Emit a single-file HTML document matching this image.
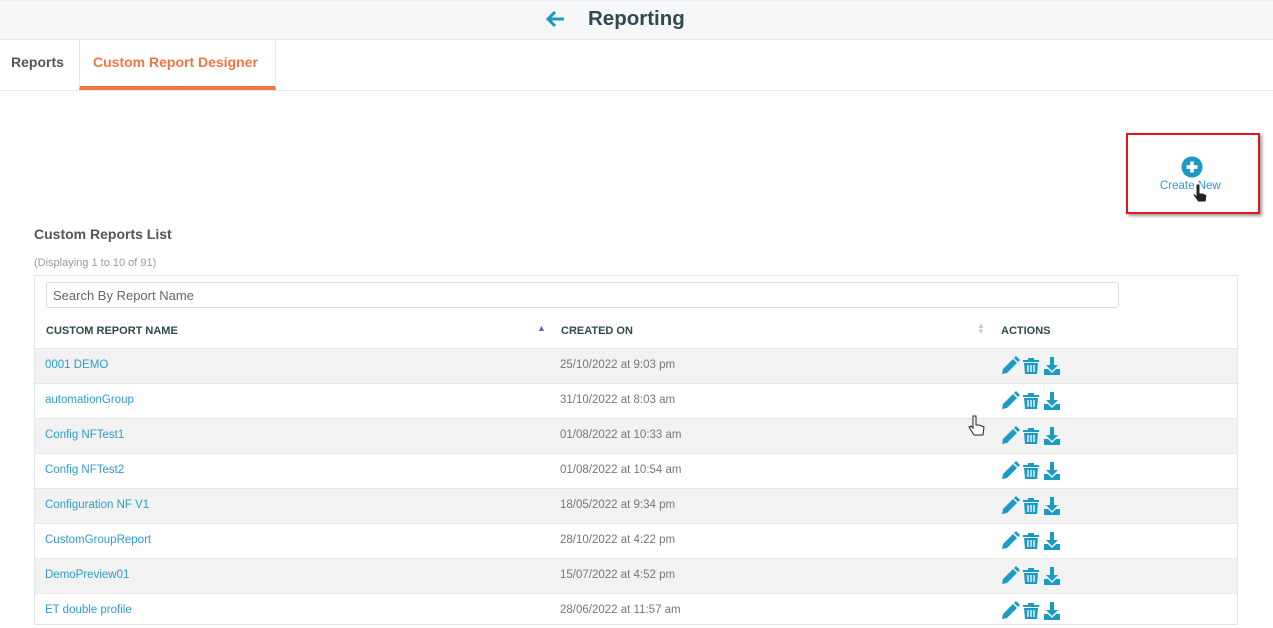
<!DOCTYPE html>
<html><head><meta charset="utf-8"><style>
*{margin:0;padding:0;box-sizing:border-box}
body{width:1273px;height:618px;overflow:hidden;background:#fff;font-family:"Liberation Sans",Arial,sans-serif;position:relative}
.abs{position:absolute}
.top{left:0;top:0;width:1273px;height:40px;background:#f6f7f8;border-bottom:1px solid #e3e6e9;border-top:1px solid #eceef0}
.title{left:588px;top:7px;font-size:20.5px;font-weight:bold;color:#2f4a4f}
.tabs{left:0;top:40px;width:1273px;height:51px;border-bottom:1px solid #e6e8ea}
.tab1{left:11px;top:54px;font-size:14px;font-weight:bold;color:#555}
.tab2{left:79px;top:40px;width:197px;height:50px;border-left:1px solid #e6e8ea;border-right:1px solid #e6e8ea;border-bottom:4px solid #ef7640}
.tab2 span{position:absolute;left:13px;top:14px;font-size:14px;font-weight:bold;color:#ef7640}
.cn{left:1126px;top:133px;width:134px;height:81px;border:2px solid #e8141b;box-shadow:2px 2px 3px #999}
.h{left:34px;top:226px;font-size:14px;font-weight:bold;color:#555}
.d{left:34px;top:257px;font-size:11px;color:#999}
.box{left:34px;top:275px;width:1204px;height:350px;border:1px solid #e3e6e9}
.search{left:46px;top:282px;width:1073px;height:26px;border:1px solid #d9dcdf;border-radius:3px;font-size:13px;color:#666;padding:5px 6px}
.th{top:325px;font-size:11px;font-weight:bold;color:#2f4a4f}
.row{left:35px;width:1202px;height:35px;border-top:1px solid #e5e7e9}
.row.g{background:#f2f2f2}
.n{position:absolute;left:10px;top:10px;font-size:11.5px;color:#2a9dcc}
.c{position:absolute;left:525px;top:10px;font-size:11.5px;color:#777}
.ic{position:absolute;left:965px;top:7px}
</style></head><body>
<div class="abs top"></div>
<svg class="abs" style="left:544px;top:9px" width="22" height="20" viewBox="0 0 22 20"><path d="M20 10H4M11 3L4 10l7 7" stroke="#1a9bc4" stroke-width="3" fill="none"/></svg>
<div class="abs title">Reporting</div>
<div class="abs tabs"></div>
<div class="abs tab1">Reports</div>
<div class="abs tab2"><span>Custom Report Designer</span></div>
<div class="abs cn"></div>
<svg class="abs" style="left:1181px;top:156px" width="22" height="22" viewBox="0 0 24 24"><circle cx="12" cy="12" r="11.5" fill="#1a9bc4"/><path d="M12 6v12M6 12h12" stroke="#fff" stroke-width="4"/></svg>
<div class="abs" style="left:1160px;top:180px;font-size:11.5px;color:#2a9dcc">Create New</div>
<svg class="abs" style="left:1192px;top:182px" width="16" height="22" viewBox="0 0 16 22"><path d="M4 2v11l-2-2-1 2 5 7h8l1-7-4-2H8V2z" fill="#222" stroke="#fff" stroke-width="1"/></svg>
<div class="abs h">Custom Reports List</div>
<div class="abs d">(Displaying 1 to 10 of 91)</div>
<div class="abs box"></div>
<div class="abs search">Search By Report Name</div>
<div class="abs th" style="left:46px">CUSTOM REPORT NAME</div>
<div class="abs" style="left:537px;top:323px;font-size:9px;color:#6a5acd">▲</div>
<div class="abs th" style="left:561px">CREATED ON</div>
<div class="abs" style="left:977px;top:323px;font-size:8px;color:#ccc;line-height:6px">▲<br>▼</div>
<div class="abs th" style="left:1001px">ACTIONS</div>
<div id="rows"></div>
<script>
var d=[["0001 DEMO","25/10/2022 at 9:03 pm"],["automationGroup","31/10/2022 at 8:03 am"],["Config NFTest1","01/08/2022 at 10:33 am"],["Config NFTest2","01/08/2022 at 10:54 am"],["Configuration NF V1","18/05/2022 at 9:34 pm"],["CustomGroupReport","28/10/2022 at 4:22 pm"],["DemoPreview01","15/07/2022 at 4:52 pm"],["ET double profile","28/06/2022 at 11:57 am"]];
var ic='<svg class="ic" width="64" height="20" viewBox="0 0 64 20"><path d="M2 18l1-5L13 3l4 4L7 17z M14 2l2-2 4 4-2 2z" fill="#1a9bc4"/><path d="M23 4h16v2H23z M28 2h6v2h-6z M24 7h14l-1 11H25z" fill="#1a9bc4"/><path d="M28 9v7M31 9v7M34 9v7" stroke="#fff" stroke-width="1.3"/><path d="M50 1h4v8h4l-6 6-6-6h4z M44 13h4l4 4 4-4h4v6H44z" fill="#1a9bc4"/></svg>';
var h='';d.forEach(function(r,i){h+='<div class="abs row'+(i%2==0?' g':'')+'" style="top:'+(348+i*35)+'px"><span class="n">'+r[0]+'</span><span class="c">'+r[1]+'</span>'+ic+'</div>'});
document.getElementById('rows').innerHTML=h;
</script>
<svg class="abs" style="left:968px;top:414px" width="18" height="24" viewBox="0 0 18 24"><path d="M5 2v12l-2-2-2 1 5 8h9l1-8-5-2H8V2z" fill="#fff" stroke="#222" stroke-width="1"/></svg>
</body></html>
